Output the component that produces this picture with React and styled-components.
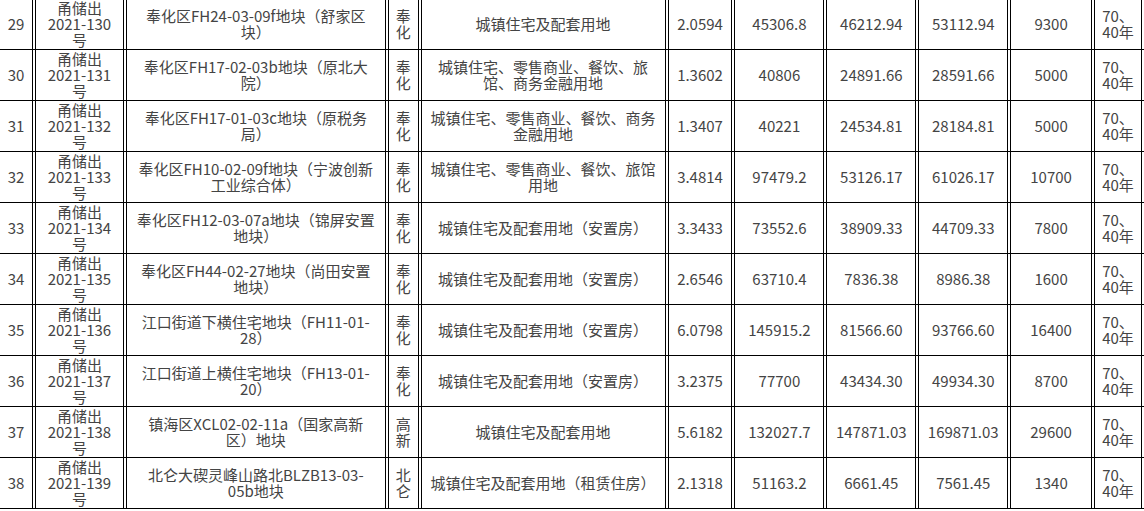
import React from "react";
import styled, { createGlobalStyle } from "styled-components";

// --------------------------------------------------

const GlobalStyle = createGlobalStyle`
	html, body {
		margin: 0;
		padding: 0;
		background: #fff;
	}
	body {
		overflow: hidden;
	}
`;

const Viewport = styled.div`
	width: 1144px;
	height: 511px;
	overflow: hidden;
	background: #fff;
`;

// row rules run through the 2px gaps between cells, as in the old page
const Table = styled.table`
	table-layout: fixed;
	border-collapse: separate;
	border-spacing: 2px 0;
	margin: -1px 0 0 -3px;
	background-image: repeating-linear-gradient(
		to bottom,
		transparent 0 50px,
		#000 50px 51px
	);
	font-family: "Noto Sans CJK SC", "Noto Sans", sans-serif;
	font-size: 15px;
	line-height: 16px;
	color: #444;
`;

const Cell = styled.td`
	box-sizing: border-box;
	width: ${ props => props.w }px;
	height: 51px;
	padding: 0 ${ props => props.pad ?? 3 }px;
	background: #fff;
	background-clip: padding-box;
	border-left: 1px solid #000;
	border-right: 1px solid #000;
	border-bottom: 1px solid #000;
	text-align: center;
	vertical-align: middle;
	white-space: nowrap;
`;

// --------------------------------------------------

const widths = [ 34, 89, 260, 31, 245, 65, 90, 90, 90, 82, 48, ];

const rows = [
	[ "29", "130", [ "奉化区FH24-03-09f地块（舒家区", "块）", ], [ "奉", "化", ], [ "城镇住宅及配套用地", ], "2.0594", "45306.8", "46212.94", "53112.94", "9300", ],
	[ "30", "131", [ "奉化区FH17-02-03b地块（原北大", "院）", ], [ "奉", "化", ], [ "城镇住宅、零售商业、餐饮、旅", "馆、商务金融用地", ], "1.3602", "40806", "24891.66", "28591.66", "5000", ],
	[ "31", "132", [ "奉化区FH17-01-03c地块（原税务", "局）", ], [ "奉", "化", ], [ "城镇住宅、零售商业、餐饮、商务", "金融用地", ], "1.3407", "40221", "24534.81", "28184.81", "5000", ],
	[ "32", "133", [ "奉化区FH10-02-09f地块（宁波创新", "工业综合体）", ], [ "奉", "化", ], [ "城镇住宅、零售商业、餐饮、旅馆", "用地", ], "3.4814", "97479.2", "53126.17", "61026.17", "10700", ],
	[ "33", "134", [ "奉化区FH12-03-07a地块（锦屏安置", "地块）", ], [ "奉", "化", ], [ "城镇住宅及配套用地（安置房）", ], "3.3433", "73552.6", "38909.33", "44709.33", "7800", ],
	[ "34", "135", [ "奉化区FH44-02-27地块（尚田安置", "地块）", ], [ "奉", "化", ], [ "城镇住宅及配套用地（安置房）", ], "2.6546", "63710.4", "7836.38", "8986.38", "1600", ],
	[ "35", "136", [ "江口街道下横住宅地块（FH11-01-", "28）", ], [ "奉", "化", ], [ "城镇住宅及配套用地（安置房）", ], "6.0798", "145915.2", "81566.60", "93766.60", "16400", ],
	[ "36", "137", [ "江口街道上横住宅地块（FH13-01-", "20）", ], [ "奉", "化", ], [ "城镇住宅及配套用地（安置房）", ], "3.2375", "77700", "43434.30", "49934.30", "8700", ],
	[ "37", "138", [ "镇海区XCL02-02-11a（国家高新", "区）地块", ], [ "高", "新", ], [ "城镇住宅及配套用地", ], "5.6182", "132027.7", "147871.03", "169871.03", "29600", ],
	[ "38", "139", [ "北仑大碶灵峰山路北BLZB13-03-", "05b地块", ], [ "北", "仑", ], [ "城镇住宅及配套用地（租赁住房）", ], "2.1318", "51163.2", "6661.45", "7561.45", "1340", ],
];

const Lines = ( { lines, }, ) => lines.map( ( line, i, ) => (
	<React.Fragment key = { i }>
		{ i > 0 && <br /> }
		{ line }
	</React.Fragment>
) );

// --------------------------------------------------

const Row = ( { data, }, ) => {
	const [ no, code, name, area, use, ha, sqm, start, max, margin, ] = data;

	return (
		<tr>
			<Cell w = { widths[0] }>{ no }</Cell>
			<Cell w = { widths[1] }><Lines lines = { [ "甬储出", `2021-${ code }`, "号", ] } /></Cell>
			<Cell w = { widths[2] }><Lines lines = { name } /></Cell>
			<Cell w = { widths[3] } pad = { 0 }><Lines lines = { area } /></Cell>
			<Cell w = { widths[4] }><Lines lines = { use } /></Cell>
			<Cell w = { widths[5] }>{ ha }</Cell>
			<Cell w = { widths[6] }>{ sqm }</Cell>
			<Cell w = { widths[7] }>{ start }</Cell>
			<Cell w = { widths[8] }>{ max }</Cell>
			<Cell w = { widths[9] }>{ margin }</Cell>
			<Cell w = { widths[10] } pad = { 0 }><Lines lines = { [ "70、", "40年", ] } /></Cell>
		</tr>
	);
};

const App = () => (
	<Viewport>
		<GlobalStyle />
		<Table>
			<tbody>
				{ rows.map( row => <Row key = { row[0] } data = { row } /> ) }
			</tbody>
		</Table>
	</Viewport>
);

export default App;
